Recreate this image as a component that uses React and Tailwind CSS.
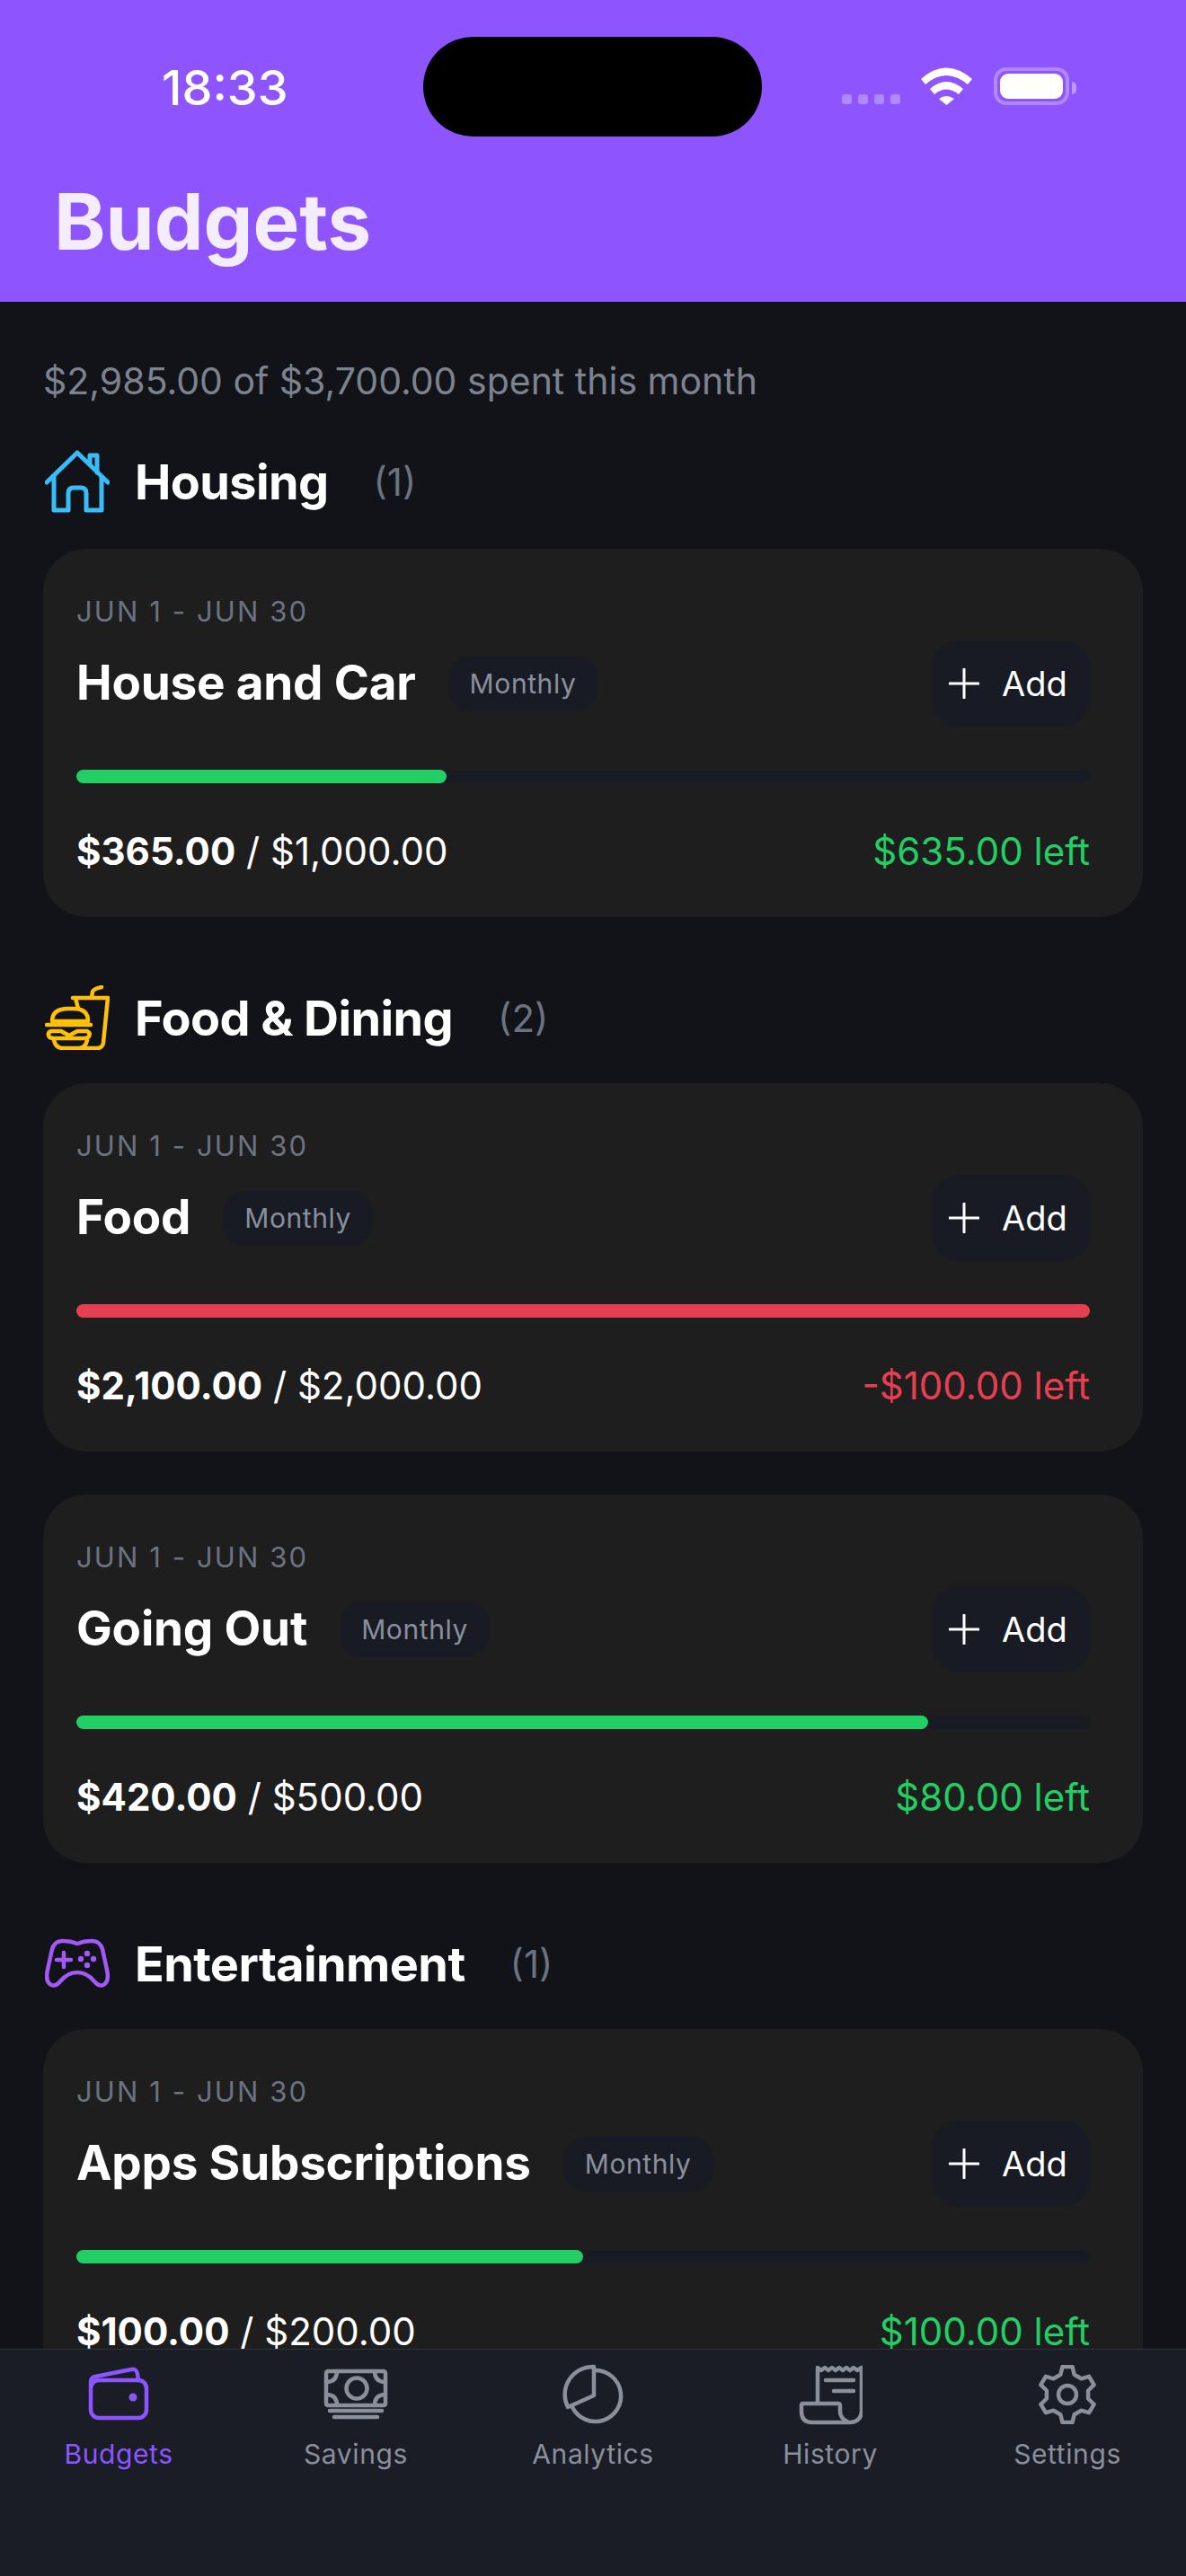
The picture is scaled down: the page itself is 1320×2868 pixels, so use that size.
const SANS = "font-['Inter','Liberation_Sans',sans-serif]";

const gearPath = (() => {
  const cx = 32, cy = 33, out = 31.5, root = 23.5;
  const pts = [];
  for (let k = 0; k < 6; k++) {
    const a = -90 + k * 60;
    [[root, -19], [out, -10], [out, 10], [root, 19]].forEach(([r, d]) => {
      const t = ((a + d) * Math.PI) / 180;
      pts.push(`${(cx + r * Math.cos(t)).toFixed(1)} ${(cy + r * Math.sin(t)).toFixed(1)}`);
    });
  }
  return "M" + pts.join("L") + "Z";
})();

function HouseIcon() {
  return (
    <svg viewBox="50 500 72 72" className="w-[72px] h-[72px] text-[#38bdf8]" fill="none" stroke="currentColor" strokeWidth="5" strokeLinecap="round" strokeLinejoin="round">
      <path d="M52 537L86 504L120 537" />
      <path d="M100 517V507H108V526" />
      <path d="M60 531V568H76V549Q76 543 82 543H90Q96 543 96 549V568H113V531" />
    </svg>
  );
}

function FoodIcon() {
  return (
    <svg viewBox="50 1097 72 72" className="w-[72px] h-[72px] text-[#ffc107]" fill="none" stroke="currentColor" strokeWidth="4.5" strokeLinecap="round" strokeLinejoin="round">
      <path d="M81 1111H120L115 1161Q114 1167 108 1167H90" />
      <path d="M84 1111L87 1123" />
      <path d="M102 1111L103 1104Q104 1101 113 1099" />
      <path d="M58 1137Q58 1123 76 1123H82Q98 1123 98 1137Z" />
      <path d="M52 1141H101" />
      <path d="M57 1148H68L77 1153L86 1148H97Q101 1150 99 1154Q97 1156 93 1156H60Q55 1156 54 1153Q53 1149 57 1148Z" />
      <path d="M60 1158Q62 1167 70 1167H88Q95 1167 97 1158" />
    </svg>
  );
}

function PadIcon() {
  return (
    <svg viewBox="51 2150 72 72" className="w-[72px] h-[72px] text-[#a259f7]" fill="none" stroke="currentColor" strokeWidth="4.5" strokeLinecap="round" strokeLinejoin="round">
      <path d="M72 2161Q80 2161 87 2164Q94 2161 102 2161Q112 2160 115 2170L120 2193Q123 2206 116 2210Q111 2212 106 2206Q98 2196 87 2196Q76 2196 68 2206Q63 2212 58 2210Q51 2206 54 2193L59 2170Q62 2160 72 2161Z" />
      <path d="M64 2182H80M72 2174V2190" />
      <g fill="currentColor" stroke="none">
        <circle cx="98" cy="2175" r="3.2" />
        <circle cx="98" cy="2188" r="3.2" />
        <circle cx="91" cy="2181" r="3.2" />
        <circle cx="105" cy="2181" r="3.2" />
      </g>
    </svg>
  );
}

function WalletIcon() {
  return (
    <svg viewBox="0 0 72 72" className="w-[72px] h-[72px]" fill="none" stroke="currentColor" strokeWidth="4.5" strokeLinecap="round" strokeLinejoin="round">
      <rect x="5" y="20" width="62" height="42" rx="9" />
      <path d="M5 27V22Q5 17 10 16L50 8Q56 7 57 13L58 20" />
      <circle cx="52" cy="39" r="4.5" fill="currentColor" stroke="none" />
    </svg>
  );
}

function MoneyIcon() {
  return (
    <svg viewBox="0 0 72 72" className="w-[72px] h-[72px]" fill="none" stroke="currentColor" strokeWidth="4.5" strokeLinecap="round" strokeLinejoin="round">
      <rect x="3" y="10" width="66" height="38" rx="2" />
      <circle cx="37" cy="29" r="11.5" />
      <path d="M3 22Q15 22 15 10M69 22Q57 22 57 10M3 36Q15 36 15 48M69 36Q57 36 57 48" />
      <path d="M7 54H65" />
      <path d="M12 61H60" />
    </svg>
  );
}

function PieIcon() {
  return (
    <svg viewBox="0 0 72 72" className="w-[72px] h-[72px]" fill="none" stroke="currentColor" strokeWidth="4.5" strokeLinecap="round" strokeLinejoin="round">
      <path d="M39 9A28.5 28.5 0 1 1 13 50" />
      <path d="M37 5V37L8 50A31 31 0 0 1 37 5Z" />
    </svg>
  );
}

function ReceiptIcon() {
  return (
    <svg viewBox="0 0 72 72" className="w-[72px] h-[72px]" fill="none" stroke="currentColor" strokeWidth="4.5" strokeLinecap="round" strokeLinejoin="round">
      <path d="M22 46V6L26 9L30 6L34 9L38 6L42 9L46 6L50 9L54 6L58 9L62 6L66 9L71 6V53Q71 67 57 67H16Q4 67 4 55V48Q4 46 6 46H45Q47 46 47 49V55Q47 63 57 67" />
      <path d="M31 20H62" />
      <path d="M40 32H62" />
    </svg>
  );
}

function GearIcon() {
  return (
    <svg viewBox="0 0 64 66" className="w-[64px] h-[66px]" fill="none" stroke="currentColor" strokeWidth="4.5" strokeLinecap="round" strokeLinejoin="round">
      <path d={gearPath} />
      <circle cx="32" cy="33" r="10" />
    </svg>
  );
}

function WifiIcon() {
  return (
    <svg viewBox="0 0 57 42" className="w-[57px] h-[42px]" fill="#fff">
      <path d="M0 13Q28 -12 57 13L52 19Q28 -1 5 19Z" />
      <path d="M10 24Q28 8 47 24L42 30Q28 19 15 30Z" />
      <path d="M20 35Q28 29 37 35L28.5 42Z" />
    </svg>
  );
}

function PlusIcon() {
  return (
    <svg viewBox="0 0 34 34" className="w-[34px] h-[34px]" fill="none" stroke="#fff" strokeWidth="3" strokeLinecap="round">
      <path d="M1 17H33M17 1V33" />
    </svg>
  );
}

function SectionHead({ icon, name, count }) {
  return (
    <div className="flex items-center h-[72px] pl-[2px]">
      {icon}
      <span className="ml-[28px] text-[54px] font-bold text-white tracking-[-0.6px]">{name}</span>
      <span className="ml-[50px] text-[42px] text-[#6b7280]">({count})</span>
    </div>
  );
}

function BudgetCard({ title, spent, total, left, pct, over, mt }) {
  return (
    <div className={`${mt} h-[410px] rounded-[48px] bg-[#1e1e1e] pl-[37px] pr-[59px] pt-[50px]`}>
      <div className="text-[31px] leading-[40px] tracking-[2.1px] text-[#6b7280]">JUN 1 - JUN 30</div>
      <div className="mt-[12px] flex items-center justify-between h-[96px]">
        <div className="flex items-center">
          <span className="text-[53px] font-bold text-white tracking-[-0.2px]">{title}</span>
          <span className="ml-[36px] h-[61px] px-[24px] flex items-center rounded-[24px] bg-[#181b23] text-[30px] tracking-[0.6px] text-[#8a8f9c]">Monthly</span>
        </div>
        <button className="h-[96px] w-[176px] pl-[19px] flex items-center gap-[25px] rounded-[30px] bg-[#181b23] text-[38px] text-white">
          <PlusIcon />
          <span>Add</span>
        </button>
      </div>
      <div className="mt-[48px] h-[15px] rounded-full bg-[#181b23]">
        <div className={`h-full rounded-full ${over ? "bg-[#e63f52]" : "bg-[#22cf65]"}`} style={{ width: `${pct}%` }} />
      </div>
      <div className="mt-[50px] flex items-center justify-between text-[42px] leading-[52px]">
        <div className="text-white">
          <span className="font-bold">{spent}</span> / {total}
        </div>
        <div className={over ? "text-[#e63f52]" : "text-[#22cf65]"}>{left}</div>
      </div>
    </div>
  );
}

function Tab({ icon, label, active }) {
  return (
    <div className={`flex flex-col items-center ${active ? "text-[#8c55ff]" : "text-[#8a8f9c]"}`}>
      <div className="h-[72px] flex items-center justify-center">{icon}</div>
      <span className="mt-[12px] text-[30px] leading-[36px] tracking-[0.6px]">{label}</span>
    </div>
  );
}

export default function App() {
  return (
    <div className={`${SANS} w-[1320px] h-[2868px] flex flex-col overflow-hidden bg-[#111318]`}>
      <header className="h-[336px] shrink-0 bg-[#8e55ff] px-[60px]">
        <div className="h-[197px] flex items-start">
          <span className="mt-[72px] ml-[120px] w-[140px] text-[54px] leading-[52px] font-medium text-white">18:33</span>
          <div className="mt-[41px] ml-[151px] w-[377px] h-[111px] shrink-0 rounded-full bg-black" />
          <div className="mt-[75px] ml-[89px] flex items-end">
            <div className="flex gap-[7px] mb-[1px]">
              <span className="w-[11px] h-[11px] rounded-[3px] bg-white/30" />
              <span className="w-[11px] h-[11px] rounded-[3px] bg-white/30" />
              <span className="w-[11px] h-[11px] rounded-[3px] bg-white/30" />
              <span className="w-[11px] h-[11px] rounded-[3px] bg-white/30" />
            </div>
            <div className="ml-[23px]"><WifiIcon /></div>
            <div className="ml-[24px] w-[84px] h-[42px] rounded-[14px] border-[4px] border-white/30 p-[3px]">
              <div className="h-full rounded-[9px] bg-white" />
            </div>
            <div className="ml-[3px] mb-[12px] w-[5px] h-[14px] rounded-r-full bg-white/40" />
          </div>
        </div>
        <h1 className="text-[87px] leading-[100px] font-bold text-[#f3edff]">Budgets</h1>
      </header>

      <main className="flex-1 overflow-hidden px-[48px] pt-[64px]">
        <p className="text-[41px] leading-[48px] text-[#7d828f]">$2,985.00 of $3,700.00 spent this month</p>
        <div className="mt-[52px]">
          <SectionHead icon={<HouseIcon />} name="Housing" count="1" />
        </div>
        <BudgetCard mt="mt-[39px]" title="House and Car" spent="$365.00" total="$1,000.00" left="$635.00 left" pct={36.5} />
        <div className="mt-[76px]">
          <SectionHead icon={<FoodIcon />} name="Food & Dining" count="2" />
        </div>
        <BudgetCard mt="mt-[37px]" title="Food" spent="$2,100.00" total="$2,000.00" left="-$100.00 left" pct={100} over />
        <BudgetCard mt="mt-[48px]" title="Going Out" spent="$420.00" total="$500.00" left="$80.00 left" pct={84} />
        <div className="mt-[76px]">
          <SectionHead icon={<PadIcon />} name="Entertainment" count="1" />
        </div>
        <BudgetCard mt="mt-[37px]" title="Apps Subscriptions" spent="$100.00" total="$200.00" left="$100.00 left" pct={50} />
      </main>

      <nav className="h-[253px] shrink-0 grid grid-cols-5 border-t border-[#2d323c] bg-[#1a1d26] pt-[14px]">
        <Tab active icon={<WalletIcon />} label="Budgets" />
        <Tab icon={<MoneyIcon />} label="Savings" />
        <Tab icon={<PieIcon />} label="Analytics" />
        <Tab icon={<ReceiptIcon />} label="History" />
        <Tab icon={<GearIcon />} label="Settings" />
      </nav>
    </div>
  );
}
